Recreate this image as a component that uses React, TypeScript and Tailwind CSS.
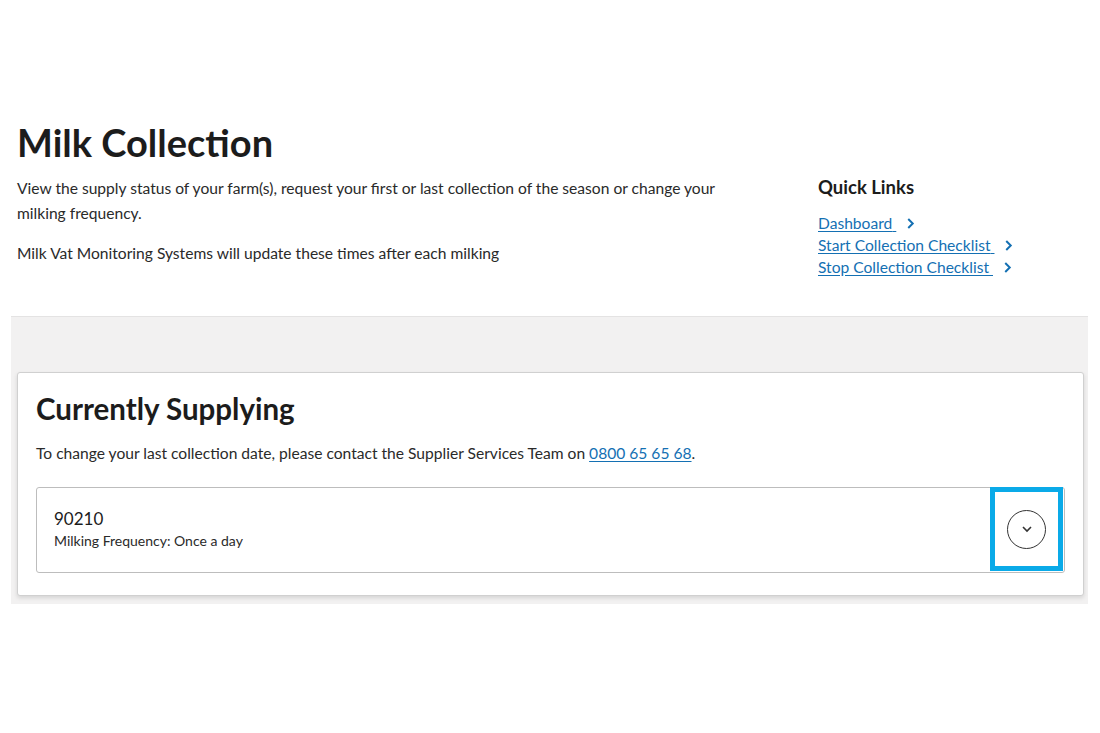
import { FC } from "react";

const Chevron: FC<{ className?: string }> = ({ className }) => (
  <svg className={className} viewBox="0 0 10 14" fill="none" stroke="currentColor" strokeWidth="2.2">
    <path d="M2.5 2l5 5-5 5" />
  </svg>
);

const QuickLink: FC<{ label: string }> = ({ label }) => (
  <a href="#" className="flex items-center gap-[10px] text-[15.6px] leading-[22px] text-[#1470b3]">
    <span className="underline underline-offset-2">{label}&nbsp;</span>
    <Chevron className="w-[9px] h-[13px] text-[#1470b3]" />
  </a>
);

export default function App() {
  return (
    <div className="min-h-screen bg-white text-[#222] pt-[120px]" style={{ fontFamily: "Lato, 'Open Sans', sans-serif" }}>
      <div className="flex px-[17px]">
        <div className="w-[730px]">
          <h1 className="text-[38px] leading-[44px] font-bold text-[#1c1c1c]">Milk Collection</h1>
          <p className="mt-[12px] text-[15.6px] leading-[25px] text-[#2a2a2a]">
            View the supply status of your farm(s), request your first or last collection of the season or change your
            milking frequency.
          </p>
          <p className="mt-[15px] text-[15.6px] leading-[25px] text-[#2a2a2a]">
            Milk Vat Monitoring Systems will update these times after each milking
          </p>
        </div>
        <div className="ml-[71px] pt-[55px]">
          <h2 className="text-[18.5px] leading-[24px] font-bold text-[#1c1c1c]">Quick Links</h2>
          <div className="mt-[13px] flex flex-col">
            <QuickLink label="Dashboard" />
            <QuickLink label="Start Collection Checklist" />
            <QuickLink label="Stop Collection Checklist" />
          </div>
        </div>
      </div>

      <div className="mt-[38px] mx-[11px] w-[1077px] bg-[#f2f1f1] border-t border-[#e4e3e3] pt-[55px] pb-[8px]">
        <div className="ml-[6px] w-[1067px] bg-white border border-[#d0d0d0] rounded-[3px] shadow-[0_2px_4px_rgba(0,0,0,0.12)] px-[18px] pt-[18px] pb-[22px]">
          <h2 className="text-[29.5px] leading-[36px] font-bold text-[#1c1c1c]">Currently Supplying</h2>
          <p className="mt-[15px] text-[15.6px] leading-[22px] text-[#2a2a2a]">
            To change your last collection date, please contact the Supplier Services Team on{" "}
            <a href="#" className="text-[#1470b3] underline underline-offset-2">0800 65 65 68</a>.
          </p>
          <div className="mt-[23px] flex items-stretch border border-[#bdbdbd] rounded-[3px] h-[86px]">
            <div className="flex-1 pl-[17px] pt-[20px]">
              <div className="text-[17px] leading-[22px] text-[#1c1c1c]">90210</div>
              <div className="mt-[2px] text-[14px] leading-[18px] text-[#2a2a2a]">Milking Frequency: Once a day</div>
            </div>
            <div className="w-[73px] mr-[1px] -my-px mb-px border-[5px] border-[#0aaae8] flex items-center justify-center">
              <div className="w-[39px] h-[39px] rounded-full border border-[#333] flex items-center justify-center">
                <svg className="w-[12px] h-[8px]" viewBox="0 0 12 8" fill="none" stroke="#333" strokeWidth="1.6">
                  <path d="M2 2l4 4 4-4" />
                </svg>
              </div>
            </div>
          </div>
        </div>
      </div>
    </div>
  );
}
